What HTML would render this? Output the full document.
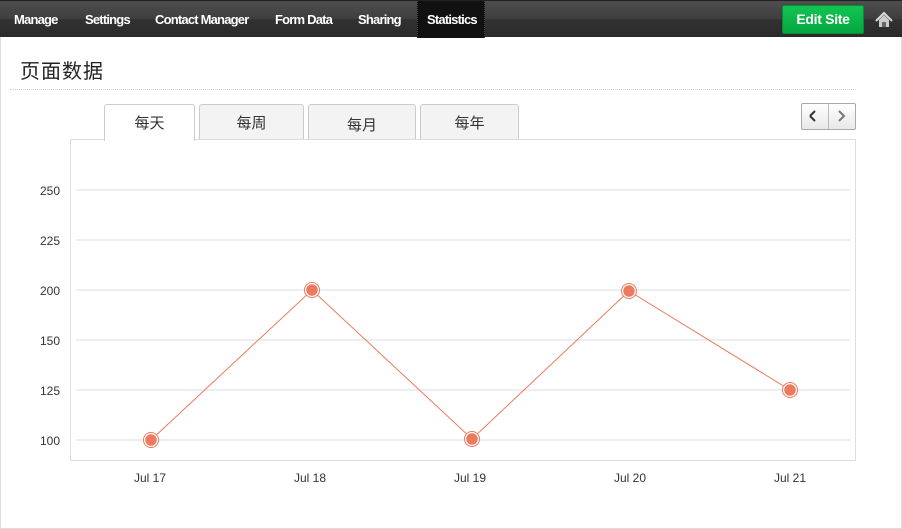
<!DOCTYPE html>
<html><head><meta charset="utf-8"><style>
*{margin:0;padding:0;box-sizing:border-box}
body{width:902px;height:529px;background:#fff;font-family:"Liberation Sans","Noto Sans CJK SC",sans-serif;position:relative;overflow:hidden}
.frame{position:absolute;left:0;top:36px;width:902px;height:493px;border:1px solid #ddd;border-top:none}
.nav{position:absolute;left:0;top:0;width:902px;height:37px;background:linear-gradient(#4e4e4e,#3e3e3e 50%,#323232 51%,#2a2a2a);border-top:1px solid #222}
.nav span{position:absolute;top:11px;color:#fff;font-size:13px;font-weight:bold;letter-spacing:-0.8px}
.stat{position:absolute;left:417px;top:0;width:68px;height:37px;background:#111;border-left:1px dotted #444;border-right:1px dotted #444}
.edit{position:absolute;left:782px;top:4px;width:82px;height:29px;background:linear-gradient(#12c552,#05a640);border:1px solid #0a8a35;border-radius:2px;color:#fff;font-weight:bold;font-size:14px;text-align:center;line-height:27px;letter-spacing:-0.3px}
h1{position:absolute;left:20px;top:55px;font-size:20px;font-weight:normal;color:#222;letter-spacing:1px}
.hr{position:absolute;left:10px;top:89px;width:846px;border-top:1px dotted #ccc}
.tab{position:absolute;top:104px;height:36px;background:#f3f3f3;border:1px solid #ccc;border-bottom:none;border-radius:3px 3px 0 0;font-size:15px;color:#333;text-align:center;line-height:38px}
.tab.a{background:#fff;height:37px;z-index:2}
.box{position:absolute;left:70px;top:139px;width:786px;height:322px;border:1px solid #ddd}
.pn{position:absolute;left:801px;top:103px;width:55px;height:27px;border:1px solid #aaa;border-radius:2px;background:linear-gradient(#fff,#e8e8e8)}
.pn i{position:absolute;left:26px;top:0;height:25px;border-left:1px solid #bbb}
svg{position:absolute;left:0;top:0}
</style></head><body>
<div class="frame"></div>
<div class="nav">
<div class="stat"></div>
<span style="left:14px">Manage</span><span style="left:85px">Settings</span><span style="left:155px">Contact Manager</span><span style="left:275px">Form Data</span><span style="left:358px">Sharing</span><span style="left:427px">Statistics</span>
<div class="edit">Edit Site</div>
<svg width="902" height="37"><path d="M876 20 L884 12 L892 20" fill="none" stroke="#ddd" stroke-width="2"/><path d="M879 19 L884 14 L889 19 V26 H879Z" fill="#ccc"/><rect x="882" y="21" width="4" height="5" fill="#666"/></svg>
</div>
<h1>页面数据</h1>
<div class="hr"></div>
<div class="tab a" style="left:104px;width:91px">每天</div>
<div class="tab" style="left:199px;width:105px">每周</div>
<div class="tab" style="left:308px;width:108px;line-height:42px">每月</div>
<div class="tab" style="left:420px;width:99px">每年</div>
<div class="pn"><i></i></div>
<div class="box"></div>
<svg width="902" height="529" font-family="Liberation Sans,sans-serif" font-size="12" fill="#333">
<path d="M810 116 L815 111 M810 116 L815 121" stroke="#333" stroke-width="2" fill="none"/>
<path d="M839 111 L844 116 L839 121" stroke="#777" stroke-width="2" fill="none"/>
<g stroke="#eee" stroke-width="2"><line x1="76" x2="850" y1="190" y2="190"/><line x1="76" x2="850" y1="240" y2="240"/><line x1="76" x2="850" y1="290" y2="290"/><line x1="76" x2="850" y1="340" y2="340"/><line x1="76" x2="850" y1="390" y2="390"/><line x1="76" x2="850" y1="440" y2="440"/></g>
<g text-anchor="end"><text x="60" y="195">250</text><text x="60" y="245">225</text><text x="60" y="295">200</text><text x="60" y="345">150</text><text x="60" y="395">125</text><text x="60" y="445">100</text></g>
<g text-anchor="middle"><text x="150" y="482">Jul 17</text><text x="310" y="482">Jul 18</text><text x="470" y="482">Jul 19</text><text x="630" y="482">Jul 20</text><text x="790" y="482">Jul 21</text></g>
<polyline points="151,440 312,290 472,439 629,291 790,390" fill="none" stroke="#ec7a5f" stroke-width="1"/>
<g fill="#ec7a5f" stroke="#fff" stroke-width="1.5"><circle cx="151" cy="440" r="6.5"/><circle cx="312" cy="290" r="6.5"/><circle cx="472" cy="439" r="6.5"/><circle cx="629" cy="291" r="6.5"/><circle cx="790" cy="390" r="6.5"/></g>
<g fill="none" stroke="#ec7a5f" stroke-width="1"><circle cx="151" cy="440" r="7.5"/><circle cx="312" cy="290" r="7.5"/><circle cx="472" cy="439" r="7.5"/><circle cx="629" cy="291" r="7.5"/><circle cx="790" cy="390" r="7.5"/></g>
</svg>
</body></html>
